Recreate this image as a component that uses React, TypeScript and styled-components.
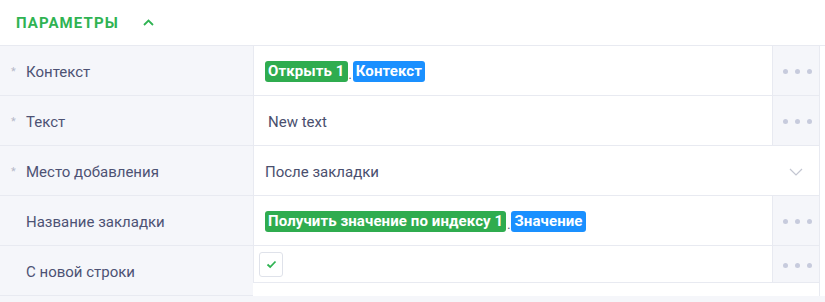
import styled, { createGlobalStyle } from 'styled-components';

const GlobalStyle = createGlobalStyle`
  html, body {
    margin: 0;
    padding: 0;
    background: #ffffff;
  }
  body {
    font-family: Roboto, "Liberation Sans", sans-serif;
  }
`;

const Panel = styled.div`
  width: 825px;
  height: 302px;
  overflow: hidden;
  display: flex;
  flex-direction: column;
  background: #ffffff;
`;

const Header = styled.div`
  height: 45px;
  border-bottom: 1px solid #e8eaf1;
  display: flex;
  align-items: center;
  gap: 24px;
  padding-left: 16px;
`;

const Title = styled.span`
  color: #2fb352;
  font-size: 15px;
  font-weight: 700;
  letter-spacing: 1.1px;
  text-transform: uppercase;
  padding-top: 1px;
`;

const Table = styled.div`
  width: 819px;
  border-right: 1px solid #e8eaf1;
  display: flex;
  flex-direction: column;
`;

const Row = styled.div`
  display: grid;
  grid-template-columns: 253px 519px 47px;
  height: 50px;
  align-items: stretch;
`;

const LabelCell = styled.div`
  background: #f5f6fa;
  border-bottom: 1px solid #e8eaf1;
  display: flex;
  align-items: center;
  padding: 2px 0 0 11px;
  color: #4d5274;
  font-size: 15px;
`;

const Star = styled.span<{ $show: boolean }>`
  width: 15px;
  color: #b5b9c9;
  font-size: 11px;
  visibility: ${(p) => (p.$show ? 'visible' : 'hidden')};
`;

const ValueCell = styled.div<{ $span?: boolean; $short?: boolean }>`
  grid-column: ${(p) => (p.$span ? '2 / 4' : 'auto')};
  height: ${(p) => (p.$short ? '37px' : 'auto')};
  align-self: ${(p) => (p.$short ? 'start' : 'stretch')};
  background: #ffffff;
  border-left: 1px solid #e8eaf1;
  border-bottom: 1px solid #e8eaf1;
  display: flex;
  align-items: ${(p) => (p.$short ? 'flex-start' : 'center')};
  padding: ${(p) => (p.$short ? '6px 0 0 5px' : '2px 0 0 11px')};
  color: #4a4f6e;
  font-size: 15px;
  box-sizing: border-box;
`;

const PlainText = styled.span<{ $indent?: number }>`
  padding-left: ${(p) => p.$indent ?? 0}px;
`;

const Chip = styled.span<{ $tone: 'green' | 'blue' }>`
  display: inline-block;
  height: 21px;
  line-height: 21px;
  padding: 0 3px;
  border-radius: 3px;
  background: ${(p) => (p.$tone === 'green' ? '#2fac4f' : '#1a90ff')};
  color: #ffffff;
  font-weight: 700;
  font-size: 15px;
  letter-spacing: 0.1px;
  white-space: nowrap;
`;

const Sep = styled.span`
  color: #4a4f69;
  font-size: 12px;
  margin: 0 1px;
  align-self: flex-end;
  padding-bottom: 13px;
`;

const DotsCell = styled.div<{ $short?: boolean }>`
  height: ${(p) => (p.$short ? '37px' : 'auto')};
  align-self: ${(p) => (p.$short ? 'start' : 'stretch')};
  background: #f5f6fa;
  border-left: 1px solid #e8eaf1;
  border-bottom: 1px solid #e8eaf1;
  box-sizing: border-box;
  display: flex;
  align-items: center;
  justify-content: center;
  gap: 7px;
  padding: 2px 0 0 2px;
`;

const Dot = styled.span`
  width: 5px;
  height: 5px;
  border-radius: 50%;
  background: #c7cbdd;
`;

const Select = styled.div`
  flex: 1;
  display: flex;
  align-items: center;
  justify-content: space-between;
  padding-right: 16px;
`;

const CheckBox = styled.div`
  width: 24px;
  height: 25px;
  box-sizing: border-box;
  border: 1px solid #dfe2ea;
  border-radius: 3px;
  display: flex;
  align-items: center;
  justify-content: center;
`;

const Footer = styled.div`
  flex: 1;
  background: #f5f6fa;
`;

const Dots = ({ short }: { short?: boolean }) => (
  <DotsCell $short={short}>
    <Dot />
    <Dot />
    <Dot />
  </DotsCell>
);

const Label = ({ text, required }: { text: string; required?: boolean }) => (
  <LabelCell>
    <Star $show={!!required}>*</Star>
    {text}
  </LabelCell>
);

export default function App() {
  return (
    <>
      <GlobalStyle />
      <Panel>
        <Header>
          <Title>Параметры</Title>
          <svg width="11" height="7" viewBox="0 0 11 7" fill="none">
            <path d="M1 6L5.5 1.5L10 6" stroke="#2fb352" strokeWidth="1.8" />
          </svg>
        </Header>
        <Table>
          <Row>
            <Label text="Контекст" required />
            <ValueCell>
              <Chip $tone="green">Открыть 1</Chip>
              <Sep>.</Sep>
              <Chip $tone="blue">Контекст</Chip>
            </ValueCell>
            <Dots />
          </Row>
          <Row>
            <Label text="Текст" required />
            <ValueCell>
              <PlainText $indent={3}>New text</PlainText>
            </ValueCell>
            <Dots />
          </Row>
          <Row>
            <Label text="Место добавления" required />
            <ValueCell $span>
              <Select>
                <span>После закладки</span>
                <svg width="14" height="8" viewBox="0 0 14 8" fill="none">
                  <path d="M1 1L7 7L13 1" stroke="#c3c6d1" strokeWidth="1.2" />
                </svg>
              </Select>
            </ValueCell>
          </Row>
          <Row>
            <Label text="Название закладки" />
            <ValueCell>
              <Chip $tone="green">Получить значение по индексу 1</Chip>
              <Sep>.</Sep>
              <Chip $tone="blue">Значение</Chip>
            </ValueCell>
            <Dots />
          </Row>
          <Row>
            <Label text="С новой строки" />
            <ValueCell $short>
              <CheckBox>
                <svg width="11" height="9" viewBox="0 0 11 9" fill="none">
                  <path d="M1.5 4.5L4.2 7L9.5 1.5" stroke="#2fb352" strokeWidth="1.8" />
                </svg>
              </CheckBox>
            </ValueCell>
            <Dots short />
          </Row>
        </Table>
        <Footer />
      </Panel>
    </>
  );
}
